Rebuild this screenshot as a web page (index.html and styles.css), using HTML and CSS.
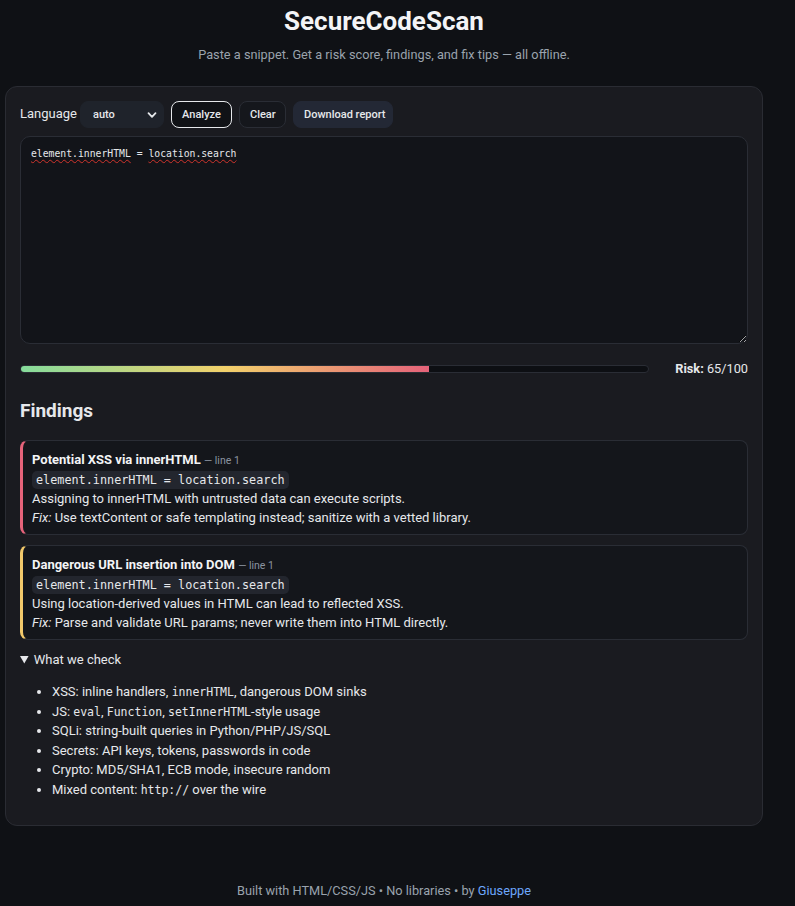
FILE: index.html
```html
<!DOCTYPE html>
<html lang="en">
<head>
<meta charset="utf-8">
<title>SecureCodeScan</title>
<link rel="stylesheet" href="styles.css">
</head>
<body>
<div class="page">
  <header class="head">
    <h1 class="title">SecureCodeScan</h1>
    <p class="subtitle">Paste a snippet. Get a risk score, findings, and fix tips — all offline.</p>
  </header>

  <main class="card">
    <div class="toolbar">
      <label class="lang-label" for="lang">Language</label>
      <span class="select-wrap">
        <select id="lang" class="select">
          <option>auto</option>
          <option>javascript</option>
          <option>python</option>
          <option>php</option>
          <option>sql</option>
        </select>
        <svg class="chev" width="10" height="10" viewBox="0 0 10 10" aria-hidden="true"><path d="M1.5 3.2 L5 6.8 L8.5 3.2" fill="none" stroke="#e6e8eb" stroke-width="1.8" stroke-linecap="round" stroke-linejoin="round"/></svg>
      </span>
      <button class="btn btn-primary">Analyze</button>
      <button class="btn btn-ghost">Clear</button>
      <button class="btn btn-soft">Download report</button>
    </div>

    <div class="editor" role="textbox" aria-multiline="true"><span class="typo">element.innerHTML</span> = <span class="typo">location.search</span></div>

    <div class="risk">
      <div class="bar"><div class="fill" style="width:65%"></div></div>
      <div class="risk-label"><b>Risk:</b> 65/100</div>
    </div>

    <h2 class="section-title">Findings</h2>

    <div class="finding sev-high">
      <div class="f-title"><strong>Potential XSS via innerHTML</strong> <span class="f-line">— line 1</span></div>
      <div><code class="code">element.innerHTML = location.search</code></div>
      <div class="f-desc">Assigning to innerHTML with untrusted data can execute scripts.</div>
      <div class="f-fix"><em>Fix:</em> Use textContent or safe templating instead; sanitize with a vetted library.</div>
    </div>

    <div class="finding sev-med">
      <div class="f-title"><strong>Dangerous URL insertion into DOM</strong> <span class="f-line">— line 1</span></div>
      <div><code class="code">element.innerHTML = location.search</code></div>
      <div class="f-desc">Using location-derived values in HTML can lead to reflected XSS.</div>
      <div class="f-fix"><em>Fix:</em> Parse and validate URL params; never write them into HTML directly.</div>
    </div>

    <details class="checks" open>
      <summary>What we check</summary>
      <ul class="check-list">
        <li>XSS: inline handlers, <code class="mono">innerHTML</code>, dangerous DOM sinks</li>
        <li>JS: <code class="mono">eval</code>, <code class="mono">Function</code>, <code class="mono">setInnerHTML</code>-style usage</li>
        <li>SQLi: string-built queries in Python/PHP/JS/SQL</li>
        <li>Secrets: API keys, tokens, passwords in code</li>
        <li>Crypto: MD5/SHA1, ECB mode, insecure random</li>
        <li>Mixed content: <code class="mono">http://</code> over the wire</li>
      </ul>
    </details>
  </main>

  <footer class="foot">Built with HTML/CSS/JS • No libraries • by <a href="#" class="foot-link">Giuseppe</a></footer>
</div>
</body>
</html>
```

FILE: styles.css
```css
* { box-sizing: border-box; }

html, body {
  margin: 0;
  padding: 0;
  background: #0f1115;
}

body {
  color: #e6e8eb;
  font-family: Roboto, "Liberation Sans", "Noto Sans", sans-serif;
  font-size: 13px;
  line-height: 1.5;
}

.page {
  width: 758px;
  margin-left: 5px;
}

.head {
  text-align: center;
  padding-top: 4px;
}

.title {
  margin: 0;
  font-size: 26px;
  line-height: 34px;
  font-weight: 700;
  color: #f3f4f6;
}

.subtitle {
  margin: 7px 0 0;
  font-size: 12.75px;
  line-height: 19.5px;
  color: #9aa3ad;
}

.card {
  margin-top: 21px;
  background: #1a1b20;
  border: 1px solid #2a2c33;
  border-radius: 12px;
  padding: 14px;
}

.toolbar {
  display: flex;
  align-items: center;
  gap: 7px;
  height: 27px;
}

.lang-label {
  font-size: 13px;
  margin-right: -4px;
}

.select-wrap {
  position: relative;
  display: inline-block;
  height: 27px;
}

.select {
  appearance: none;
  -webkit-appearance: none;
  width: 84px;
  height: 27px;
  background: #1f232b;
  color: #e6e8eb;
  border: 1px solid #1f232b;
  border-radius: 8px;
  padding: 0 0 0 12px;
  font-family: inherit;
  font-size: 11px;
  font-weight: 500;
}

.chev {
  position: absolute;
  right: 7px;
  top: 9px;
  pointer-events: none;
}

.btn {
  height: 27px;
  border-radius: 8px;
  color: #e6e8eb;
  font-family: inherit;
  font-size: 11px;
  font-weight: 500;
  padding: 0 10px;
  white-space: nowrap;
  cursor: pointer;
}

.btn-primary {
  background: #101216;
  border: 1.5px solid #e6e8eb;
  width: 61px;
}

.btn-ghost {
  background: #15171c;
  border: 1px solid #2a2d35;
  width: 47px;
}

.btn-soft {
  background: #232835;
  border: 1px solid #232835;
  width: 100px;
}

.editor {
  margin-top: 8px;
  height: 208px;
  background: #121419;
  border: 1px solid #2a2d35;
  border-radius: 10px;
  padding: 11px 10px 10px;
  font-family: "DejaVu Sans Mono", "Liberation Mono", monospace;
  font-size: 9.75px;
  line-height: 12px;
  color: #e6e8eb;
  white-space: pre;
  overflow: auto;
  resize: vertical;
}

.typo {
  text-decoration: underline wavy #d0342c;
  text-decoration-thickness: 1px;
  text-underline-offset: 2px;
}

.risk {
  display: flex;
  align-items: center;
  gap: 12px;
  height: 20px;
  margin-top: 15px;
}

.bar {
  flex: 1;
  height: 8px;
  background: #0d0f13;
  border: 1px solid #2a2d35;
  border-radius: 999px;
  overflow: hidden;
}

.fill {
  height: 100%;
  background: linear-gradient(90deg, #86dc9c 0%, #f2d16b 50%, #e5637a 100%);
}

.risk-label {
  width: 87px;
  text-align: right;
  font-size: 12.75px;
  white-space: nowrap;
}

.risk-label b { font-weight: 700; }

.section-title {
  margin: 19px 0 16px;
  font-size: 19px;
  line-height: 26px;
  font-weight: 700;
}

.finding {
  background: #14161b;
  border: 1px solid #2a2d35;
  border-left: 3px solid #e5637a;
  border-radius: 8px;
  padding: 9px 12px 6px 9px;
  margin-bottom: 10px;
}

.finding.sev-med { border-left-color: #f2c96b; }

.f-title strong {
  font-weight: 700;
  color: #f3f4f6;
}

.f-line {
  font-size: 10.5px;
  color: #8b94a0;
}

.code {
  display: inline-block;
  font-family: "DejaVu Sans Mono", "Liberation Mono", monospace;
  font-size: 11.8px;
  line-height: 18px;
  background: #23262e;
  border-radius: 5px;
  padding: 0 4px;
  vertical-align: middle;
}

.f-fix em { font-style: italic; }

.checks {
  margin-top: 9px;
}

.checks summary {
  cursor: pointer;
  line-height: 19.5px;
}

.check-list {
  margin: 13px 0 12px;
  padding-left: 32px;
}

.check-list li {
  line-height: 19.5px;
  height: 19.5px;
}

.mono {
  font-family: "DejaVu Sans Mono", "Liberation Mono", monospace;
  font-size: 11.5px;
  line-height: 1;
}

.foot {
  margin-top: 55px;
  text-align: center;
  font-size: 12.75px;
  line-height: 20px;
  color: #9aa3ad;
  padding-bottom: 5px;
}

.foot-link {
  color: #6ea8fe;
  text-decoration: none;
}
```
